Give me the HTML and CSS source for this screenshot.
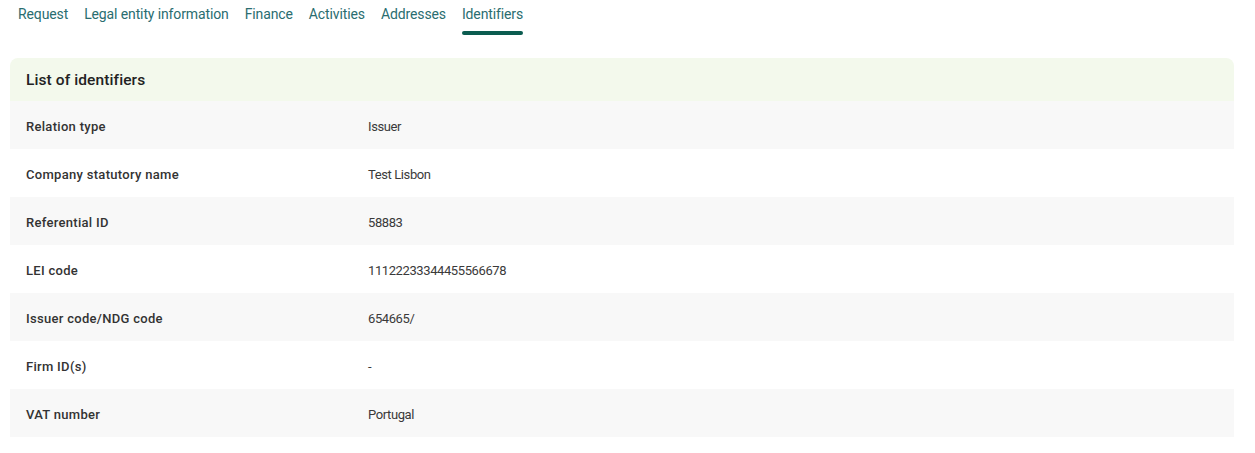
FILE: index.html
```html
<!DOCTYPE html>
<html>
<head>
<meta charset="utf-8">
<link rel="stylesheet" href="styles.css">
</head>
<body>
<nav class="tabs">
  <a class="tab">Request</a>
  <a class="tab">Legal entity information</a>
  <a class="tab">Finance</a>
  <a class="tab">Activities</a>
  <a class="tab">Addresses</a>
  <a class="tab active">Identifiers</a>
</nav>
<section class="card">
  <div class="card-header">List of identifiers</div>
  <div class="row"><div class="label">Relation type</div><div class="value">Issuer</div></div>
  <div class="row"><div class="label">Company statutory name</div><div class="value">Test Lisbon</div></div>
  <div class="row"><div class="label">Referential ID</div><div class="value">58883</div></div>
  <div class="row"><div class="label">LEI code</div><div class="value">11122233344455566678</div></div>
  <div class="row"><div class="label">Issuer code/NDG code</div><div class="value">654665/</div></div>
  <div class="row"><div class="label">Firm ID(s)</div><div class="value">-</div></div>
  <div class="row"><div class="label">VAT number</div><div class="value">Portugal</div></div>
</section>
</body>
</html>
```
FILE: styles.css
```css
* { box-sizing: border-box; }
body {
  margin: 0;
  padding: 0 21px 0 10px;
  font-family: Roboto, "Liberation Sans", sans-serif;
  background: #ffffff;
  color: #333333;
}
.tabs {
  display: flex;
  gap: 16px;
  padding: 5px 0 0 8px;
  height: 58px;
}
.tab {
  font-size: 14px;
  color: #2a6d70;
  line-height: 19px;
  height: 29px;
  letter-spacing: -0.12px;
  position: relative;
}
.tab.active::after {
  content: "";
  position: absolute;
  left: 0;
  right: 0;
  top: 26px;
  height: 4px;
  border-radius: 2px;
  background: #0b5c50;
}
.card {
  border-radius: 8px 8px 0 0;
  overflow: hidden;
}
.card-header {
  background: #f3f9ec;
  height: 43px;
  display: flex;
  align-items: center;
  padding: 1px 16px 0;
  font-size: 15.5px;
  font-weight: 500;
  color: #222222;
  letter-spacing: 0.1px;
}
.row {
  display: grid;
  grid-template-columns: 342px 1fr;
  align-items: center;
  height: 48px;
  padding: 2px 16px 0;
  font-size: 13px;
}
.row:nth-child(even) { background: #f8f8f8; }
.row:nth-child(odd) { background: #ffffff; }
.label { font-weight: 500; color: #333333; letter-spacing: 0.3px; }
.value { color: #3a3a3a; letter-spacing: -0.4px; }
```
